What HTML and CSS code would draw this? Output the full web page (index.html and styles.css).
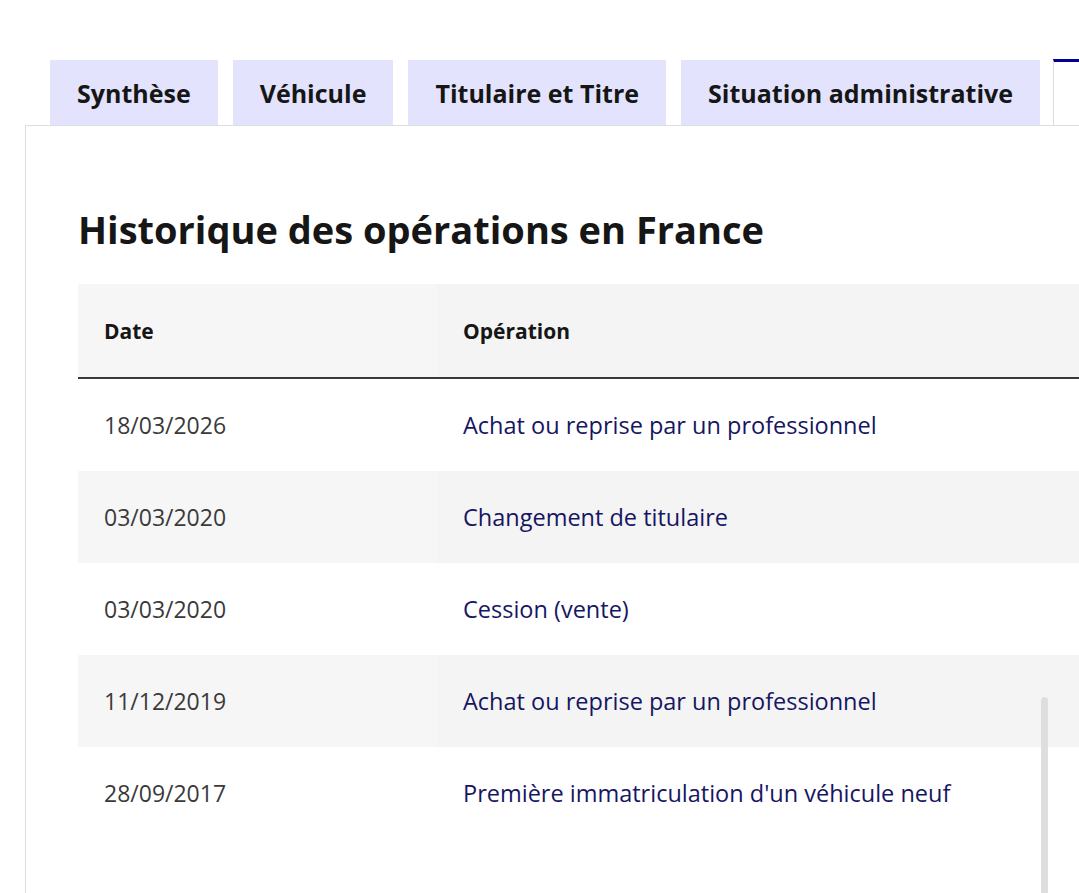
FILE: index.html
```html
<!DOCTYPE html>
<html lang="fr">
<head>
    <meta charset="UTF-8">
    <meta name="viewport" content="width=device-width, initial-scale=1.0">
    <title>Historique du véhicule</title>
    <link rel="stylesheet" href="styles.css">
</head>
<body>
    <div class="tabs">
        <ul class="tab-list">
            <li><button class="tab">Synthèse</button></li>
            <li><button class="tab">Véhicule</button></li>
            <li><button class="tab">Titulaire et Titre</button></li>
            <li><button class="tab">Situation administrative</button></li>
            <li><button class="tab tab-active">Historique</button></li>
        </ul>

        <div class="tab-panel">
            <h2>Historique des opérations en France</h2>

            <div class="table-wrap">
                <table>
                    <thead>
                        <tr>
                            <th class="col-date">Date</th>
                            <th>Opération</th>
                        </tr>
                    </thead>
                    <tbody>
                        <tr>
                            <td class="col-date">18/03/2026</td>
                            <td class="op">Achat ou reprise par un professionnel</td>
                        </tr>
                        <tr>
                            <td class="col-date">03/03/2020</td>
                            <td class="op">Changement de titulaire</td>
                        </tr>
                        <tr>
                            <td class="col-date">03/03/2020</td>
                            <td class="op">Cession (vente)</td>
                        </tr>
                        <tr>
                            <td class="col-date">11/12/2019</td>
                            <td class="op">Achat ou reprise par un professionnel</td>
                        </tr>
                        <tr>
                            <td class="col-date">28/09/2017</td>
                            <td class="op">Première immatriculation d'un véhicule neuf</td>
                        </tr>
                    </tbody>
                </table>
                <div class="scroll-thumb"></div>
            </div>
        </div>
    </div>
</body>
</html>
```

FILE: styles.css
```css
body {
    margin: 0;
    font-family: "Open Sans", "Noto Sans", Arial, sans-serif;
    color: #161616;
    background: white;
    overflow: hidden;
}

.tabs {
    margin-left: 25px;
    padding-top: 60px;
    width: 1300px;
}

.tab-list {
    display: flex;
    gap: 15px;
    list-style: none;
    margin: 0;
    padding: 0 0 0 25px;
    border-bottom: 1px solid #dddddd;
    height: 65px;
}

.tab-list li {
    display: flex;
    flex-shrink: 0;
}

.tab {
    font-family: inherit;
    font-size: 25px;
    font-weight: 700;
    color: #161616;
    background: #e3e3fd;
    border: none;
    padding: 0 27px;
    height: 65px;
    white-space: nowrap;
    cursor: pointer;
}

.tab-active {
    background: white;
    border-top: 3px solid #000091;
    border-left: 1px solid #dddddd;
    height: 66px;
    margin-top: -1px;
    margin-left: -2px;
    padding-left: 40px;
    color: #000091;
}

.tab-panel {
    border-left: 1px solid #dddddd;
    padding: 79px 0 60px 52px;
}

h2 {
    margin: 0 0 31px 0;
    font-size: 38px;
    font-weight: 700;
    line-height: 48px;
    color: #161616;
}

.table-wrap {
    position: relative;
}

table {
    border-collapse: collapse;
    width: 1100px;
    font-size: 23px;
}

th {
    text-align: left;
    font-weight: 700;
    font-size: 21px;
    height: 93px;
    padding: 0 26px;
    background: #f6f6f6;
    border-bottom: 2px solid #3a3a3a;
    color: #161616;
}

th + th {
    background: #f4f4f4;
}

td {
    height: 92px;
    padding: 0 26px;
    color: #3a3a3a;
}

.col-date {
    width: 307px;
}

tbody tr:nth-child(even) td {
    background: #f6f6f6;
}

tbody tr:nth-child(even) td + td {
    background: #f4f4f4;
}

td.op {
    font-size: 23.5px;
    color: #161661;
}

/* overlay scrollbar of the table wrapper */
.scroll-thumb {
    position: absolute;
    left: 963px;
    top: 413px;
    width: 7px;
    height: 300px;
    border-radius: 4px;
    background: #dedede;
}
```
